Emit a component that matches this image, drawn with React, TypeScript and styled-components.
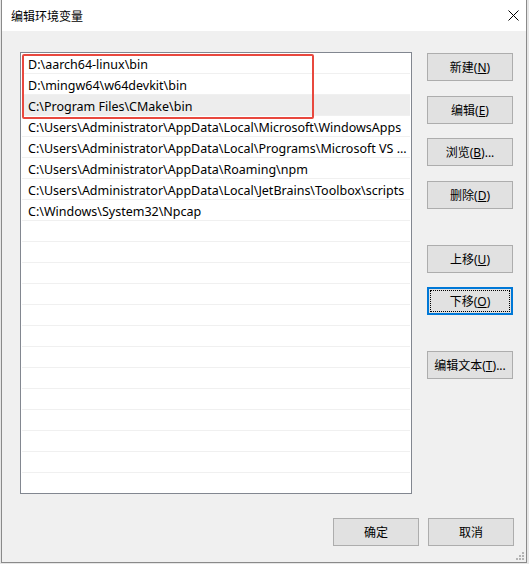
import React from 'react'
import styled, { createGlobalStyle } from 'styled-components'

const GlobalStyle = createGlobalStyle`
  html, body {
    margin: 0;
    padding: 0;
    background: #e6e6e6;
  }
  body {
    font-family: "Noto Sans", "Noto Sans CJK SC", sans-serif;
    font-size: 12px;
    color: #000000;
  }
`

const StyledWindow = styled.div`
  position: relative;
  box-sizing: border-box;
  width: 526px;
  height: 563px;
  margin-left: 1px;
  background: #f0f0f0;
  border: 1px solid #8a8a8a;
  border-top: none;
  display: flex;
  flex-direction: column;
`

const StyledTitleBar = styled.div`
  height: 31px;
  flex: 0 0 31px;
  background: #ffffff;
  display: flex;
  align-items: center;
  justify-content: space-between;
  padding: 0 0 0 9px;
  font-size: 12px;
`

const StyledClose = styled.div`
  width: 26px;
  height: 31px;
  display: flex;
  align-items: center;
  justify-content: center;
`

const StyledContent = styled.div`
  display: grid;
  grid-template-columns: 392px 86px;
  column-gap: 15px;
  padding: 21px 0 0 18px;
`

const StyledList = styled.div`
  position: relative;
  box-sizing: border-box;
  height: 442px;
  background: #ffffff;
  border: 1px solid #828790;
  overflow: hidden;
`

const StyledRow = styled.div<{ $selected?: boolean }>`
  box-sizing: border-box;
  height: 21px;
  margin: 0 1px;
  padding: 3px 0 0 6px;
  line-height: 17px;
  font-size: 12.5px;
  border-bottom: 1px solid #f0f0f0;
  background: ${(p) => (p.$selected ? '#ededed' : '#ffffff')};
  white-space: nowrap;
  overflow: hidden;
`

const StyledMark = styled.div`
  position: absolute;
  left: 1px;
  top: 1px;
  width: 292px;
  height: 65px;
  box-sizing: border-box;
  border: 2px solid #e8483e;
  border-radius: 2px;
  pointer-events: none;
`

const StyledButtonStack = styled.div`
  display: flex;
  flex-direction: column;
  padding-top: 1px;
`

const StyledButton = styled.div<{ $top?: number; $focused?: boolean }>`
  box-sizing: border-box;
  width: 86px;
  height: 28px;
  margin-top: ${(p) => p.$top || 0}px;
  background: #e1e1e1;
  border: ${(p) => (p.$focused ? '2px solid #0078d7' : '1px solid #adadad')};
  display: flex;
  align-items: center;
  justify-content: center;
  font-size: 12px;
  white-space: nowrap;
  outline: ${(p) => (p.$focused ? '1px dotted #000000' : 'none')};
  outline-offset: -4px;
  u {
    text-decoration: underline;
    text-underline-offset: 1px;
  }
`

const StyledFooter = styled.div`
  display: flex;
  justify-content: flex-end;
  gap: 9px;
  margin-top: 24px;
  padding-right: 12px;
`

const StyledGrip = styled.svg`
  position: absolute;
  right: 1px;
  bottom: 1px;
`

const paths = [
  'D:\\aarch64-linux\\bin',
  'D:\\mingw64\\w64devkit\\bin',
  'C:\\Program Files\\CMake\\bin',
  'C:\\Users\\Administrator\\AppData\\Local\\Microsoft\\WindowsApps',
  'C:\\Users\\Administrator\\AppData\\Local\\Programs\\Microsoft VS ...',
  'C:\\Users\\Administrator\\AppData\\Roaming\\npm',
  'C:\\Users\\Administrator\\AppData\\Local\\JetBrains\\Toolbox\\scripts',
  'C:\\Windows\\System32\\Npcap',
]

const rows = [...paths, ...Array(21 - paths.length).fill('')]

const sideButtons = [
  { label: '新建', key: 'N', top: 0 },
  { label: '编辑', key: 'E', top: 15 },
  { label: '浏览', key: 'B', top: 14, more: true },
  { label: '删除', key: 'D', top: 15 },
  { label: '上移', key: 'U', top: 36 },
  { label: '下移', key: 'O', top: 14, focused: true },
  { label: '编辑文本', key: 'T', top: 36, more: true },
]

const App = () => (
  <>
    <GlobalStyle />
    <StyledWindow>
      <StyledTitleBar>
        <span>编辑环境变量</span>
        <StyledClose>
          <svg width="11" height="11" viewBox="0 0 11 11">
            <path d="M0.5 0.5 L10.5 10.5 M10.5 0.5 L0.5 10.5" stroke="#000" strokeWidth="1" />
          </svg>
        </StyledClose>
      </StyledTitleBar>
      <StyledContent>
        <StyledList>
          {rows.map((text, i) => (
            <StyledRow key={i} $selected={i === 2}>
              {text}
            </StyledRow>
          ))}
          <StyledMark />
        </StyledList>
        <StyledButtonStack>
          {sideButtons.map((b) => (
            <StyledButton key={b.key} $top={b.top} $focused={b.focused}>
              {b.label}(<u>{b.key}</u>){b.more ? '...' : ''}
            </StyledButton>
          ))}
        </StyledButtonStack>
      </StyledContent>
      <StyledFooter>
        <StyledButton>确定</StyledButton>
        <StyledButton>取消</StyledButton>
      </StyledFooter>
      <StyledGrip width="9" height="9" viewBox="0 0 9 9">
        <g fill="#b4b4b4">
          <rect x="6" y="0" width="2" height="2" />
          <rect x="3" y="3" width="2" height="2" />
          <rect x="6" y="3" width="2" height="2" />
          <rect x="0" y="6" width="2" height="2" />
          <rect x="3" y="6" width="2" height="2" />
          <rect x="6" y="6" width="2" height="2" />
        </g>
      </StyledGrip>
    </StyledWindow>
  </>
)

export default App
